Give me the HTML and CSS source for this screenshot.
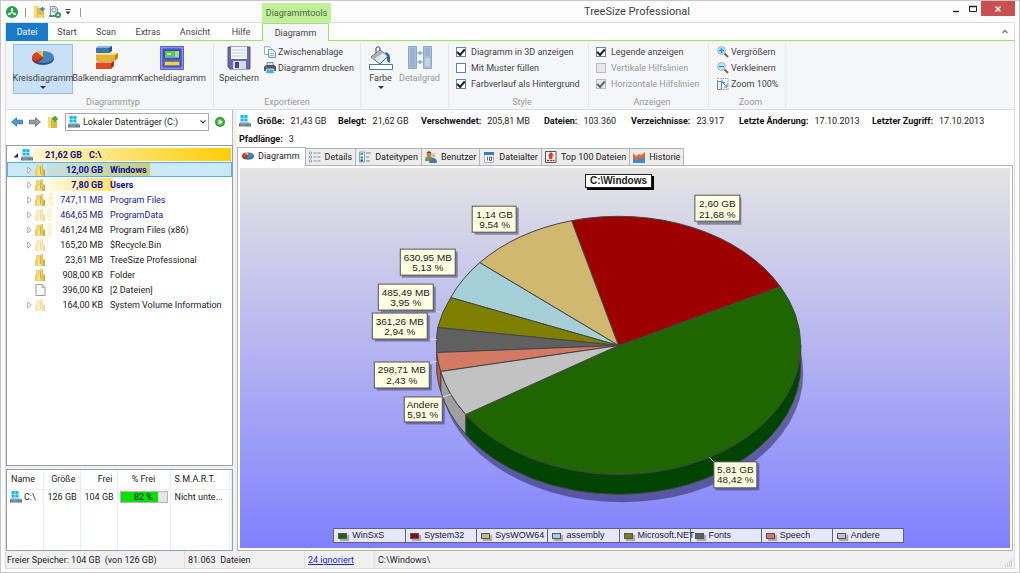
FILE: index.html
```html
<!DOCTYPE html>
<html lang="de">
<head>
<meta charset="utf-8">
<title>TreeSize Professional</title>
<link rel="stylesheet" href="styles.css">
</head>
<body>
<svg class="sprite" aria-hidden="true">
  <defs>
    <linearGradient id="foldGrad" x1="0" x2="1"><stop offset="0" stop-color="#f6e28c"/><stop offset="1" stop-color="#c9a22c"/></linearGradient>
    <symbol id="logo" viewBox="0 0 12 12"><circle cx="6" cy="6" r="6" fill="#22a04a"/><path d="M6 2.200v4M6 6.200 2.800 8.600M6 6.200l3.200 2.400" stroke="#fff" stroke-width="1.200"/><path d="M6 1.600l1.500 2.800h-3zM1.900 9.200l.9-3 2 2.600zM10.100 9.200l-.9-3-2 2.600z" fill="#fff"/></symbol>
    <symbol id="folder" viewBox="0 0 11 12"><path d="M1 1h4l1 1v10H1z" fill="#f0d676"/><path d="M5 0h3v5l2 1v6H5z" fill="url(#foldGrad)"/><path d="M0 6l2-1v7H0z" fill="#e9cd68"/><path d="M4 6v5.500" stroke="#fff3b4" stroke-width=".9"/><path d="M5.500 2v8" stroke="#b8922a" stroke-width=".6"/></symbol>
    <symbol id="drive" viewBox="0 0 12 12"><path d="M1.500 0h3.200v3H1.500zM5.300 0h3.200v3H5.300zM1.500 3.600h3.200v3H1.500zM5.300 3.600h3.200v3H5.300z" fill="#18b8f0"/><path d="M1 7h9l2 2H0z" fill="#b7c3cb"/><path d="M0 8.500h12v3H0z" fill="#5d7486"/><path d="M1.500 10h6" stroke="#8fb0d8"/><path d="M9 10h2" stroke="#50d050"/></symbol>
    <symbol id="pie" viewBox="0 0 22 14"><ellipse cx="11" cy="8" rx="11" ry="6" fill="#28507e"/><ellipse cx="11" cy="6" rx="11" ry="6" fill="#4485bd"/><path d="M11 6 3 10A11 6 0 0 1 5 1.200z" fill="#e0401c"/><path d="M3 10 11 6v2L4 12Q1 11 0 8V6q0 2.500 3 4z" fill="#a82a10"/><path d="M11 6 5 1.200A11 6 0 0 1 11 0z" fill="#f4c63a"/></symbol>
    <symbol id="play" viewBox="0 0 10 10"><circle cx="5" cy="5" r="5" fill="#2f9a35"/><circle cx="5" cy="5" r="3.300" fill="#62c258"/><path d="M3.700 2.500 7.500 5 3.700 7.500z" fill="#fff"/></symbol>
    <symbol id="arrow" viewBox="0 0 12 10"><path d="M.6 5 5.500.7v2.500h6v3.600h-6v2.500z" fill="currentColor" stroke-width=".8"/></symbol>
    <symbol id="expand" viewBox="0 0 5 8"><path d="M.7 1v6L4.300 4z" fill="#fff" stroke="#999" stroke-width=".8"/></symbol>
    <symbol id="lens" viewBox="0 0 12 12"><path d="m7 7 4 4" stroke="#8d6248" stroke-width="2"/><circle cx="4.500" cy="4.500" r="3.900" fill="#cceafa" stroke="#a0aeb9"/><path d="M2 4.500h5" stroke="#2598da" stroke-width="1.600"/></symbol>
    <symbol id="details" viewBox="0 0 12 11"><path d="M.5.500h2v2h-2zM.5 4.500h2v2h-2zM.5 8.500h2v2h-2z" fill="#fff" stroke="#8294a8" stroke-width=".8"/><path d="M4.500 1.500h3M8.500 1.500h3M4.500 5.500h3M8.500 5.500h3M4.500 9.500h3M8.500 9.500h3" stroke="#8392a5"/></symbol>
    <symbol id="types" viewBox="0 0 12 11"><path d="M.5.500h5v10h-5z" fill="#dce9f5" stroke="#7790aa" stroke-width=".8"/><path d="M1.500 1.500h2.500v2H1.500z" fill="#369bd6"/><path d="M1.500 5h2.500v2H1.500z" fill="#4aa74a"/><path d="M1.500 8h2.500v2H1.500z" fill="#2f57a0"/><path d="M7 1.500h5M7 5.500h3M7 9.500h4" stroke="#69839e"/></symbol>
  </defs>
</svg>
<div class="window">
  <header class="titlebar">
    <div class="quick">
      <svg class="i12"><use href="#logo"/></svg>
      <span class="tick"></span>
      <button aria-label="Ordner öffnen"><svg class="i12" viewBox="0 0 12 12"><path d="M1 0h5v12H1z" fill="#f3dc80"/><path d="M4 2h7v10H4z" fill="#e4bb47"/><path d="M5 9h5v3H5z" fill="#f5d978"/><path d="M12 3H8m2-2L8 3l2 2" stroke="#2a8cda" stroke-width="1.500" fill="none"/></svg></button>
      <button aria-label="Scan"><svg class="i12" viewBox="0 0 12 12"><path d="M1.500.500h5l2 2v7h-7z" fill="#f2f5f8" stroke="#8496a6"/><circle cx="5" cy="4" r="2.200" fill="#cfe2f0" stroke="#70879a" stroke-width=".8"/><path d="M0 9h7v2H0z" fill="#70808e"/><circle cx="9" cy="9" r="3" fill="#22a04a"/><path d="M9 7.200l1.400 2.800H7.600z" fill="#fff"/></svg></button>
      <button aria-label="Anpassen"><svg class="i6" viewBox="0 0 6 6"><path d="M.5.500h5" stroke="#444"/><path d="M.5 2.500h5L3 5.500z" fill="#333"/></svg></button>
      <span class="tick"></span>
    </div>
    <div class="context">Diagrammtools</div>
    <h1>TreeSize Professional</h1>
    <div class="winbtns">
      <button aria-label="Minimieren"><svg viewBox="0 0 8 8"><path d="M1 6.500h6" stroke="#222" stroke-width="1.400"/></svg></button>
      <button aria-label="Maximieren"><svg viewBox="0 0 8 8"><path d="M.5 1.500h7v5h-7z" fill="none" stroke="#222"/><path d="M0 1.500h8" stroke="#222" stroke-width="1.500"/></svg></button>
      <button class="close" aria-label="Schließen"><svg viewBox="0 0 8 8"><path d="m1.500 1.500 5 5m0-5-5 5" stroke="#fff" stroke-width="1.400"/></svg></button>
    </div>
  </header>

  <div class="frame">
    <nav class="menu">
      <button class="file">Datei</button>
      <button class="m1">Start</button><button class="m2">Scan</button><button class="m3">Extras</button><button class="m4">Ansicht</button><button class="m5">Hilfe</button>
      <button class="current">Diagramm</button>
      <button class="collapse" aria-label="Menüband minimieren"><svg class="i6" viewBox="0 0 6 6"><path d="m.5 4 2.500-2.500L5.500 4" fill="none" stroke="#777" stroke-width="1.300"/></svg></button>
    </nav>

    <section class="ribbon">
      <div class="group g1">
        <div class="body">
          <button class="big on"><svg class="i24" viewBox="-1 -4 24 22"><use href="#pie" width="22" height="14"/></svg><span>Kreisdiagramm</span><i class="caret"></i></button>
          <button class="big"><svg class="i24" viewBox="0 0 24 24"><path d="M2 2l3-2h13v5l-3 2H2z" fill="#245580"/><path d="M2 2l3-2h13l-3 2z" fill="#87b8dc"/><path d="M2 2h13v5H2z" fill="#3777aa"/><path d="M2 9l3-2h19v5l-3 3H2z" fill="#b88512"/><path d="M2 9h19v6H2z" fill="#e5b32e"/><path d="M2 9l3-2h19l-3 2z" fill="#f9df87"/><path d="M2 17l3-2h15v5l-3 3H2z" fill="#a93519"/><path d="M2 17h15v6H2z" fill="#e04b25"/><path d="M2 17l3-2h15l-3 2z" fill="#f39a7b"/></svg><span>Balkendiagramm</span></button>
          <button class="big"><svg class="i24" viewBox="0 0 24 24"><path d="M.500.500h23v23H.5z" fill="#8890e8" stroke="#5a66cc"/><path d="M3 3h18v18H3z" fill="#4c5bd4" stroke="#3a49bb"/><path d="M4.500 4.500h15v8h-15z" fill="#5ea0e8" stroke="#2b55b4"/><path d="M5 5h9v6H5z" fill="#5cc55c"/><path d="M15 5h4v6h-4z" fill="#b2d95b"/><path d="M4.500 15.500h15v4h-15z" fill="#e4cd6a" stroke="#987f31"/><path d="M7 7h4v2H7z" fill="#d8e66e"/></svg><span>Kacheldiagramm</span></button>
        </div>
        <h2>Diagrammtyp</h2>
      </div>
      <div class="group g2">
        <div class="body">
          <button class="big"><svg class="i24" viewBox="0 0 24 24"><path d="M1 1h22v22H3l-2-2z" fill="#6d68a6" stroke="#57528c"/><path d="M4 1h16v12H4z" fill="#f2f5fa"/><path d="M5 4h14M5 7h14M5 10h14" stroke="#ccd3df"/><path d="M6 15h13v8H6z" fill="#d6dae6"/><path d="M8 16h4v6H8z" fill="#4a4878"/></svg><span>Speichern</span></button>
          <div class="small">
            <button><svg class="i12" viewBox="0 0 12 12"><path d="M.5.500h5l2 2v6h-7z" fill="#fff" stroke="#8b9bab" stroke-width=".8"/><path d="M4.500 3.500h4l3 3v5h-7z" fill="#e4f0fa" stroke="#547ea8" stroke-width=".8"/><path d="M6 7.500h4M6 9.500h4" stroke="#6ea7d8" stroke-width=".8"/></svg>Zwischenablage</button>
            <button><svg class="i12" viewBox="0 0 12 12"><path d="M3 .5h6v4H3z" fill="#cfe4f5" stroke="#697887" stroke-width=".8"/><path d="M0 4.500 2 3h8l2 1.500V9H0z" fill="#4b5966"/><path d="M2.500 7h7l1 4.500h-9z" fill="#58a8e2" stroke="#e5edf2" stroke-width=".8"/><path d="M1 5h2" stroke="#e8673c"/></svg>Diagramm drucken</button>
          </div>
        </div>
        <h2>Exportieren</h2>
      </div>
      <div class="group g3">
        <div class="body">
          <button class="big"><svg class="i24" viewBox="0 0 24 24"><path d="M7 7V2q2-3 4 0v7" fill="none" stroke="#444"/><path d="m2 11 9-7 8 6-8 8z" fill="#e3e8ee" stroke="#56636f"/><path d="m3 11 8-6 3 2-9 6z" fill="#a8b3be"/><path d="M16 6q6 0 5 11-4-1-3-7z" fill="#2f659b"/><path d="M.5 18.500h23v5H.5z" fill="#fff" stroke="#4a78ac"/></svg><span>Farbe</span><i class="caret"></i></button>
          <button class="big" disabled><svg class="i24" viewBox="0 0 24 24"><path d="M.500.500h8v22h-8zM15.500.500h8v22h-8z" fill="#a9bfd9" stroke="#8fa8c4"/><path d="M2 2h5v19H2zM17 2h5v8h-5z" fill="#9bb4d2"/><path d="M17 12h5v8h-5z" fill="#c5d6e8"/><path d="M9 7h6M9 16h6" stroke="#9db5d0"/><path d="M12 4.500 14 7l-2 2.500L10 7zM12 13.500l2 2.500-2 2.500-2-2.500z" fill="#8eacd0"/></svg><span>Detailgrad</span></button>
        </div>
      </div>
      <div class="group g4">
        <div class="checks">
          <label><input type="checkbox" checked>Diagramm in 3D anzeigen</label>
          <label><input type="checkbox">Mit Muster füllen</label>
          <label><input type="checkbox" checked>Farbverlauf als Hintergrund</label>
        </div>
        <h2>Style</h2>
      </div>
      <div class="group g5">
        <div class="checks">
          <label><input type="checkbox" checked>Legende anzeigen</label>
          <label class="off"><input type="checkbox" disabled>Vertikale Hilfslinien</label>
          <label class="off"><input type="checkbox" checked disabled>Horizontale Hilfslinien</label>
        </div>
        <h2>Anzeigen</h2>
      </div>
      <div class="group g6">
        <div class="small">
          <button><svg class="i12" viewBox="0 0 12 12"><use href="#lens" width="12" height="12"/><path d="M4.500 2v5" stroke="#2598da" stroke-width="1.600"/></svg>Vergrößern</button>
          <button><svg class="i12"><use href="#lens"/></svg>Verkleinern</button>
          <button><svg class="i12" viewBox="0 0 12 12"><path d="M.5.500h10.500v11H.5z" fill="#fff" stroke="#8d9bab" stroke-dasharray="1.500 1"/><path d="M.5 3.500h4v8h-4z" fill="#e9eff5" stroke="#77899c"/><path d="M5 1.500v3h3M6 5l4 4m0-3v3H7" fill="none" stroke="#3489ce"/></svg>Zoom 100%</button>
        </div>
        <h2>Zoom</h2>
      </div>
    </section>

    <main class="work">
      <aside class="left">
        <div class="nav">
          <button class="back" aria-label="Zurück"><svg viewBox="0 0 12 10"><use href="#arrow"/></svg></button>
          <button class="fwd" aria-label="Vor"><svg viewBox="0 0 12 10"><use href="#arrow" transform="matrix(-1 0 0 1 12 0)"/></svg></button>
          <button aria-label="Aufwärts"><svg class="i12" viewBox="0 0 12 12"><path d="M1 1h5v11H1z" fill="#f3dc80"/><path d="M4 3h6v9H4z" fill="#ddb744"/><path d="M8 6V1M5.500 3.500 8 1l2.500 2.500" stroke="#3ea740" stroke-width="1.800" fill="none"/></svg></button>
          <div class="combo">
            <svg class="i12"><use href="#drive"/></svg>
            <select aria-label="Laufwerk"><option>Lokaler Datenträger (C:)</option></select>
            <svg class="chev" viewBox="0 0 6 6"><path d="m.5 1.500 2.500 2.500 2.500-2.500" fill="none" stroke="#444" stroke-width="1.100"/></svg>
          </div>
          <button aria-label="Scan starten"><svg class="i10"><use href="#play"/></svg></button>
        </div>

        <ul class="tree">
          <li class="root"><svg class="ex" viewBox="0 0 5 8"><path d="M5 2v4.500H.5z" fill="#333"/></svg><svg class="i12"><use href="#drive"/></svg><div class="cell"><b class="bar" style="width:100%"></b><span class="size">21,62 GB</span><span class="name">C:\</span></div></li>
          <li class="hot sel"><svg class="ex"><use href="#expand"/></svg><svg class="fo"><use href="#folder"/></svg><div class="cell"><b class="bar" style="width:56%"></b><span class="size">12,00 GB</span><span class="name">Windows</span></div></li>
          <li class="hot"><svg class="ex"><use href="#expand"/></svg><svg class="fo"><use href="#folder"/></svg><div class="cell"><b class="bar" style="width:36%"></b><span class="size">7,80 GB</span><span class="name">Users</span></div></li>
          <li class="blue"><svg class="ex"><use href="#expand"/></svg><svg class="fo"><use href="#folder"/></svg><div class="cell"><b class="bar" style="width:3.4%"></b><span class="size">747,11 MB</span><span class="name">Program Files</span></div></li>
          <li class="blue faint"><svg class="ex"><use href="#expand"/></svg><svg class="fo"><use href="#folder"/></svg><div class="cell"><b class="bar" style="width:2.1%"></b><span class="size">464,65 MB</span><span class="name">ProgramData</span></div></li>
          <li><svg class="ex"><use href="#expand"/></svg><svg class="fo"><use href="#folder"/></svg><div class="cell"><b class="bar" style="width:2.1%"></b><span class="size">461,24 MB</span><span class="name">Program Files (x86)</span></div></li>
          <li class="faint"><svg class="ex"><use href="#expand"/></svg><svg class="fo"><use href="#folder"/></svg><div class="cell"><b class="bar" style="width:.8%"></b><span class="size">165,20 MB</span><span class="name">$Recycle.Bin</span></div></li>
          <li><span class="ex"></span><svg class="fo"><use href="#folder"/></svg><div class="cell"><span class="size">23,61 MB</span><span class="name">TreeSize Professional</span></div></li>
          <li><span class="ex"></span><svg class="fo"><use href="#folder"/></svg><div class="cell"><span class="size">908,00 KB</span><span class="name">Folder</span></div></li>
          <li><span class="ex"></span><svg class="fo" viewBox="0 0 10 12"><path d="M.5.500h6l3 3v8h-9z" fill="#fbfbfb" stroke="#999"/><path d="M6.500.500v3h3" fill="none" stroke="#999" stroke-width=".8"/></svg><div class="cell"><span class="size">396,00 KB</span><span class="name">[2 Dateien]</span></div></li>
          <li class="faint"><svg class="ex"><use href="#expand"/></svg><svg class="fo"><use href="#folder"/></svg><div class="cell"><span class="size">164,00 KB</span><span class="name">System Volume Information</span></div></li>
        </ul>

        <div class="drives">
          <table>
            <colgroup><col class="c1"><col class="c2"><col class="c2"><col class="c3"><col class="c4"><col></colgroup>
            <thead><tr><th>Name</th><th class="r">Größe</th><th class="r">Frei</th><th class="c">% Frei</th><th>S.M.A.R.T.</th><th></th></tr></thead>
            <tbody><tr><td><span class="drv"><svg class="i12"><use href="#drive"/></svg>C:\</span></td><td class="r">126 GB</td><td class="r">104 GB</td><td class="gauge"><div><b style="width:82%"></b><span>82 %</span></div></td><td>Nicht unte...</td><td></td></tr>
            <tr class="rest"><td></td><td></td><td></td><td></td><td></td><td></td></tr></tbody>
          </table>
        </div>
      </aside>

      <section class="right">
        <dl class="info">
          <div class="lead"><svg class="i12"><use href="#drive"/></svg><dt>Größe:</dt><dd>21,43 GB</dd></div>
          <div><dt>Belegt:</dt><dd>21,62 GB</dd></div>
          <div><dt>Verschwendet:</dt><dd>205,81 MB</dd></div>
          <div><dt>Dateien:</dt><dd>103.360</dd></div>
          <div><dt>Verzeichnisse:</dt><dd>23.917</dd></div>
          <div><dt>Letzte Änderung:</dt><dd>17.10.2013</dd></div>
          <div><dt>Letzter Zugriff:</dt><dd>17.10.2013</dd></div>
          <div><dt>Pfadlänge:</dt><dd>3</dd></div>
        </dl>
        <div class="tabs" role="tablist">
          <button role="tab" aria-selected="true" class="active"><svg class="i12" viewBox="0 0 22 14"><use href="#pie"/></svg>Diagramm</button>
          <button role="tab"><svg class="i12"><use href="#details"/></svg>Details</button>
          <button role="tab"><svg class="i12"><use href="#types"/></svg>Dateitypen</button>
          <button role="tab"><svg class="i12" viewBox="0 0 12 12"><circle cx="4" cy="3" r="2.500" fill="#bd854b"/><path d="M0 10q0-5 4-5t4 5z" fill="#749650"/><circle cx="8" cy="4.500" r="2.300" fill="#e6b987"/><path d="M4 12q0-5 4-5t4 5z" fill="#4a79a9"/><path d="M1.500 2Q4-1.500 6.500 2z" fill="#65472d"/></svg>Benutzer</button>
          <button role="tab"><svg class="i12" viewBox="0 0 12 12"><path d="M1.500 1.500h9v10h-9z" fill="#f5f8fb" stroke="#a9b6c2"/><path d="M1 1h10v3H1z" fill="#367dbe"/><path d="M4.500 5.500v4M6.500 6h2v3.500h-2z" fill="none" stroke="#33475a" stroke-width=".8"/></svg>Dateialter</button>
          <button role="tab"><svg class="i12" viewBox="0 0 12 12"><path d="M.5.500h10.500v11H.5z" fill="#fff" stroke="#555"/><path d="M6 1 9.500 4.500h-2V8h-3.500V4.500H2.500z" fill="#e33a25"/><path d="M2 9.500h8" stroke="#9b2117" stroke-width="1.500" stroke-dasharray="2 .8"/></svg>Top 100 Dateien</button>
          <button role="tab"><svg class="i12" viewBox="0 0 12 12"><path d="M0 2l3 3 3-2 2 1 4-3v11H0z" fill="#ee6a2b"/><path d="M0 7l3 2 3-3 2 2 4-2v6H0z" fill="#3e8bd0"/></svg>Historie</button>
        </div>
        <div class="panel">
          <figure class="chart">
            <svg class="plot" viewBox="240 168 771 379" role="img" aria-label="Kreisdiagramm C:\Windows">
              <ellipse cx="622" cy="373" rx="182" ry="129" fill="#20204a" opacity=".5"/>
              <g stroke="#444" stroke-width="1">
                <path d="M466 414A182 129.500 0 0 0 619.500 474A182 129.500 0 0 0 801.500 344.500v20A182 129.500 0 0 1 619.500 494A182 129.500 0 0 1 466 434z" fill="#004400"/>
                <path d="M441 371A182 129.500 0 0 0 466 414v20A182 129.500 0 0 1 441 391z" fill="#a0a0a0"/>
                <path d="M437 352A182 129.500 0 0 0 441 371v20A182 129.500 0 0 1 437 372z" fill="#b85c48"/>
                <path d="M619 345 781 286A182 129.500 0 0 1 801.500 344.500A182 129.500 0 0 1 619.500 474A182 129.500 0 0 1 466 414z" fill="#1f6600"/>
                <path d="M619 345 572 220A182 129.500 0 0 1 781 286z" fill="#9c0000"/>
                <path d="M619 345 480 262A182 129.500 0 0 1 572 220z" fill="#d0b870"/>
                <path d="M619 345 451 297A182 129.500 0 0 1 480 262z" fill="#a6d0d8"/>
                <path d="M619 345 438 327A182 129.500 0 0 1 451 297z" fill="#808000"/>
                <path d="M619 345 437 352A182 129.500 0 0 1 438 327z" fill="#606060"/>
                <path d="M619 345 441 371A182 129.500 0 0 1 437 352z" fill="#d47a64"/>
                <path d="M619 345 466 414A182 129.500 0 0 1 441 371z" fill="#c2c2c2"/>
              </g>
              <path d="m693 226 6-8M518 234l3-2M455 274l7 4M433 309l8 3M427 339h10M430 362l7-1M442 397l9-3M710 457l6 6" stroke="#ddd" fill="none"/>
              <g class="marks">
                <g class="shade"><rect x="698" y="197" width="44" height="27"/><rect x="475" y="207" width="44" height="27"/><rect x="402" y="251" width="56" height="26"/><rect x="381" y="286" width="55" height="26"/><rect x="375" y="315" width="55" height="26"/><rect x="377" y="364" width="55" height="26"/><rect x="406" y="399" width="39" height="25"/><rect x="716" y="463" width="44" height="27"/></g>
                <g class="tip"><rect x="695.500" y="194.500" width="45" height="26"/><rect x="472.500" y="205.500" width="44" height="26"/><rect x="400.500" y="248.500" width="55" height="26"/><rect x="378.500" y="283.500" width="55" height="26"/><rect x="372.500" y="312.500" width="55" height="26"/><rect x="374.500" y="361.500" width="55" height="26"/><rect x="404.500" y="396.500" width="38" height="25"/><rect x="714.500" y="461.500" width="43" height="26"/></g>
                <text x="718" y="206">2,60 GB</text><text x="718" y="217">21,68 %</text>
                <text x="495" y="217">1,14 GB</text><text x="495" y="227">9,54 %</text>
                <text x="428" y="260">630,95 MB</text><text x="428" y="270">5,13 %</text>
                <text x="406" y="295">485,49 MB</text><text x="406" y="305">3,95 %</text>
                <text x="400" y="324">361,26 MB</text><text x="400" y="334">2,94 %</text>
                <text x="402" y="373">298,71 MB</text><text x="402" y="384">2,43 %</text>
                <text x="423" y="408">Andere</text><text x="423" y="418">5,91 %</text>
                <text x="736" y="473">5,81 GB</text><text x="736" y="483">48,42 %</text>
              </g>
            </svg>
            <figcaption>C:\Windows</figcaption>
            <ul class="legend">
              <li><i class="k1"></i>WinSxS</li><li><i class="k2"></i>System32</li><li><i class="k3"></i>SysWOW64</li><li><i class="k4"></i>assembly</li><li><i class="k5"></i>Microsoft.NET</li><li><i class="k6"></i>Fonts</li><li><i class="k7"></i>Speech</li><li><i class="k8"></i>Andere</li>
            </ul>
          </figure>
        </div>
      </section>
    </main>

    <footer class="status">
      <span class="s1">Freier Speicher: 104 GB&nbsp; (von 126 GB)</span>
      <span class="s2">81.063&nbsp; Dateien</span>
      <span class="s3"><a href="#ignoriert">24 ignoriert</a></span>
      <span class="s4">C:\Windows\</span>
      <svg class="grip" viewBox="0 0 8 8"><path d="M6 1h1M4 3h1M6 3h1M2 5h1M4 5h1M6 5h1M0 7h1M2 7h1M4 7h1M6 7h1" stroke="#aaa"/></svg>
    </footer>
  </div>
</div>
</body>
</html>
```
FILE: styles.css
```css
* { box-sizing: border-box; }
html, body { height: 100%; margin: 0; }
body { font: 9px/12px Roboto, "Open Sans", sans-serif; color: #222; }
button, select, input { font: inherit; color: inherit; margin: 0; }
button { border: 0; padding: 0; background: none; white-space: nowrap; }
ul, dl, dd, figure, h1, h2 { margin: 0; padding: 0; font-weight: normal; }
ul { list-style: none; }
svg { display: block; flex: none; }
.sprite { position: absolute; width: 0; height: 0; }
.i6 { width: 6px; height: 6px; }
.i10 { width: 10px; height: 10px; }
.i12 { width: 12px; height: 12px; }
.i24 { width: 24px; height: 24px; }

.window { min-height: 100%; display: flex; flex-direction: column; background: #fcfcfc; border: 1px solid #c8c8c8; padding: 0 4px 3px; }

/* Title bar */
.titlebar { display: grid; grid-template-columns: 257px 69px 1fr 68px; height: 21px; }
.quick { display: flex; align-items: center; gap: 4px; padding-left: 1px; }
.quick .tick { width: 1px; height: 9px; background: #999; margin: 0 3px; }
.quick .tick:last-child { margin-left: 5px; }
.context { background: #c0f098; margin-top: 2px; text-align: center; line-height: 20px; color: #4c6a3c; }
.titlebar h1 { font-size: 11px; line-height: 21px; color: #444; padding-left: 253px; }
.winbtns { display: flex; height: 15px; }
.winbtns button { flex: 1; display: grid; place-items: center; }
.winbtns svg { width: 8px; height: 8px; }
.winbtns .close { flex: none; width: 34px; background: #c75050; }

/* Ribbon */
.frame { flex: 1; display: flex; flex-direction: column; border: 1px solid #ddd; background: #fff; }
.menu { display: flex; height: 18px; border-bottom: 1px solid #97e565; color: #444; }
.file { width: 42px; background: #1979ca; color: #fff; margin-bottom: -1px; }
.m1 { width: 38px; } .m2 { width: 40px; } .m3 { width: 44px; } .m4 { width: 50px; } .m5 { width: 42px; }
.menu .current { width: 67px; height: 18px; margin-bottom: -1px; background: #f4f6f7; border: 1px solid #97e565; border-bottom: 0; }
.collapse { margin-left: auto; width: 18px; display: grid; place-items: center; }
.ribbon { display: flex; height: 69px; background: #f4f6f7; border-bottom: 1px solid #ddd; color: #444; }
.group { display: flex; flex-direction: column; justify-content: space-between; padding: 1px 0 0 7px; margin: 2px 0 1px; border-right: 1px solid #e3e6e8; }
.g1 { width: 208px; } .g2 { width: 147px; } .g3 { width: 88px; } .g4 { width: 140px; } .g5 { width: 120px; } .g6 { width: 77px; }
.g2, .g3 { padding-left: 0; }
.group h2 { font-size: 9px; line-height: 12px; color: #999; text-align: center; }
.body { display: flex; }
.big { display: flex; flex-direction: column; align-items: center; width: 66px; height: 50px; border: 1px solid transparent; padding-top: 1px; }
.big span { margin-top: 2px; line-height: 12px; }
.big.on { width: 60px; background: #c9e0f7; border-color: #92c0e8; }
.g2 .big { width: 50px; } .g3 .big { width: 39px; }
.big:disabled { color: #999; }
.caret { border: 3px solid transparent; border-top: 3px solid #333; border-bottom: 0; margin-top: 2px; }
.small { display: flex; flex-direction: column; }
.small button { display: flex; align-items: center; gap: 2px; height: 16px; }
.g6 .small { padding-left: 1px; }
.checks label { display: flex; align-items: center; gap: 5px; height: 16px; }
.off { color: #999; }
.checks input { appearance: none; width: 10px; height: 10px; border: 1px solid #5f82ab; background: #fff; display: grid; place-items: center; }
.checks input:checked::before { content: ""; width: 6px; height: 3px; border: solid #222; border-width: 0 0 2px 2px; transform: translateY(-1px) rotate(-48deg); }
.checks input:disabled { border-color: #bbb; background: #e8e8e8; }
.checks input:disabled:checked::before { border-color: #667; }

/* Work area */
.work { flex: 1; display: grid; grid-template-columns: 227px 1fr; column-gap: 4px; min-height: 0; background: #f0f0f0; }
.left { display: flex; flex-direction: column; background: #f0f0f0; }
.nav { display: flex; align-items: center; gap: 6px; height: 35px; padding: 0 7px 12px 5px; background: #fff; border-right: 1px solid #bbb; }
.nav button svg:not([class]) { width: 12px; height: 10px; }
.back { color: #3fa0e4; stroke: #3f6890; } .fwd { color: #9a9da0; stroke: #666; }
.combo { display: flex; align-items: center; flex: 1; height: 18px; border: 1px solid #aaa; padding-left: 2px; }
.combo select { appearance: none; border: 0; background: none; padding: 0 0 0 3px; flex: 1; min-width: 0; line-height: 14px; }
.combo .chev { width: 6px; height: 6px; margin-right: 2px; }
.tree { flex: 1; border: 1px solid #999fa8; background: #fff; padding-top: 1px; }
.tree li { display: flex; align-items: center; height: 15px; padding: 0 1px 0 20px; }
.tree .root { padding-left: 6px; }
.ex { width: 5px; height: 8px; margin-right: 3px; }
.fo { width: 11px; height: 12px; margin-right: 1px; }
.cell { position: relative; flex: 1; display: flex; align-items: center; height: 13px; }
.bar { position: absolute; inset: 0 auto 0 0; background: linear-gradient(90deg, #fffae4, #fff0b8); }
.cell span { position: relative; white-space: nowrap; }
.size { width: 56px; text-align: right; margin-right: 7px; }
.root .size { width: 48px; }
.root .cell { margin-left: 1px; }
.root .bar { background: linear-gradient(90deg, #fff6cc, #ffd93e 70%, #ffcd08); }
.root, .hot { font-weight: bold; color: #101090; }
.hot .bar { background: linear-gradient(90deg, #fffae4, #ffe070); }
.tree .sel { background: #cbe8f6; outline: 1px solid #58b0e0; outline-offset: -1px; }
.sel .bar { background: linear-gradient(90deg, #c6e0e4, #c9cf78); }
.blue { color: #202090; }
.faint .fo { opacity: .45; }
.drives { height: 82px; margin-top: 3px; border: 1px solid #999fa8; background: #fff; display: flex; }
.drives table { width: 100%; height: 100%; table-layout: fixed; border-collapse: collapse; }
.c1 { width: 36px; } .c2 { width: 37px; } .c3 { width: 53px; } .c4 { width: 59px; }
.drives th, .drives td { padding: 0 4px; font-weight: normal; text-align: left; border-right: 1px solid #e3eff8; white-space: nowrap; }
.drives th { height: 19px; border-bottom: 1px solid #eee; }
.drives td { height: 14px; }
.drives .r { text-align: right; } .drives .c { text-align: center; }
.drives .rest td { height: auto; }
.drives .drv { display: flex; align-items: center; gap: 2px; }
.drives td:first-child { padding: 0 3px; }
.drives .gauge { padding: 1px 2px; }
.gauge div { position: relative; height: 12px; border: 1px solid #b5b5b5; background: #e6e6e6; }
.gauge b { display: block; height: 100%; background: #06e006; }
.gauge span { position: absolute; inset: 0; text-align: center; line-height: 10px; }

.right { display: flex; flex-direction: column; min-width: 0; padding-right: 1px; background: #fff; }
.info { display: grid; grid-template-columns: 99px 83px 123px 87px 108px 133px 1fr; row-gap: 4px; padding: 5px 0 0 2px; height: 37px; }
.info div { display: flex; align-items: center; gap: 6px; height: 12px; white-space: nowrap; }
.info dt { font-weight: bold; color: #111; }
.tabs { display: flex; align-items: flex-end; }
.tabs button { display: flex; align-items: center; gap: 4px; height: 17px; padding: 0 3px; background: #ececec; border: 1px solid #b4b4b4; border-left: 0; border-bottom: 0; }
.tabs .active { height: 19px; margin-bottom: -1px; position: relative; background: #fff; border-left: 1px solid #b4b4b4; padding: 0 5px 2px 4px; }
.panel { flex: 1; border: 1px solid #b4b4b4; padding: 2px; display: flex; }
.chart { flex: 1; display: grid; grid-template: 1fr / 1fr; background: linear-gradient(#e4e4e4, #8080ff); }
.chart > * { grid-area: 1 / 1; }
.plot { width: 100%; height: 100%; min-height: 300px; }
.tip rect { fill: #ffffe1; stroke: #555; }
.shade rect { fill: #333355; opacity: .5; }
.marks text { font: 10px "Liberation Sans", sans-serif; text-anchor: middle; fill: #222; }
figcaption { justify-self: center; align-self: start; margin: 6px 13px 0 0; padding: 0 4px; border: 1px solid #222; background: #fff; box-shadow: 2px 2px 0 #000; font: bold 10px/12px "Liberation Sans", sans-serif; color: #222; }
.legend { justify-self: center; align-self: end; display: grid; grid-template-columns: repeat(8, 1fr); width: 74.1%; margin: 0 13px 5px 0; border: 1px solid #606080; background: #e6e6ff; font: 9px/13px "Liberation Sans", sans-serif; }
.legend li { display: flex; align-items: center; gap: 5px; height: 13px; padding-left: 4px; white-space: nowrap; min-width: 0; }
.legend li + li { border-left: 1px solid #606080; }
.legend i { flex: none; width: 9px; height: 6px; border: 1px solid #555; box-shadow: 2px 2px 1px #aaaabb; }
.k1 { background: #1f6600; } .k2 { background: #9c0000; } .k3 { background: #d0b870; } .k4 { background: #a6d0d8; }
.k5 { background: #808000; } .k6 { background: #606060; } .k7 { background: #d47a64; } .k8 { background: #c2c2c2; }

/* Status bar */
.status { display: flex; height: 17px; background: #f0f0f0; line-height: 19px; }
.status span { padding-left: 3px; border-left: 1px solid #ddd; }
.status .s1 { width: 178px; padding-left: 1px; border: 0; }
.s2 { width: 120px; } .s3 { width: 70px; } .s4 { flex: 1; }
.status a { color: #2222dd; }
.grip { width: 8px; height: 8px; align-self: flex-end; margin: 0 1px 1px 0; }
```
